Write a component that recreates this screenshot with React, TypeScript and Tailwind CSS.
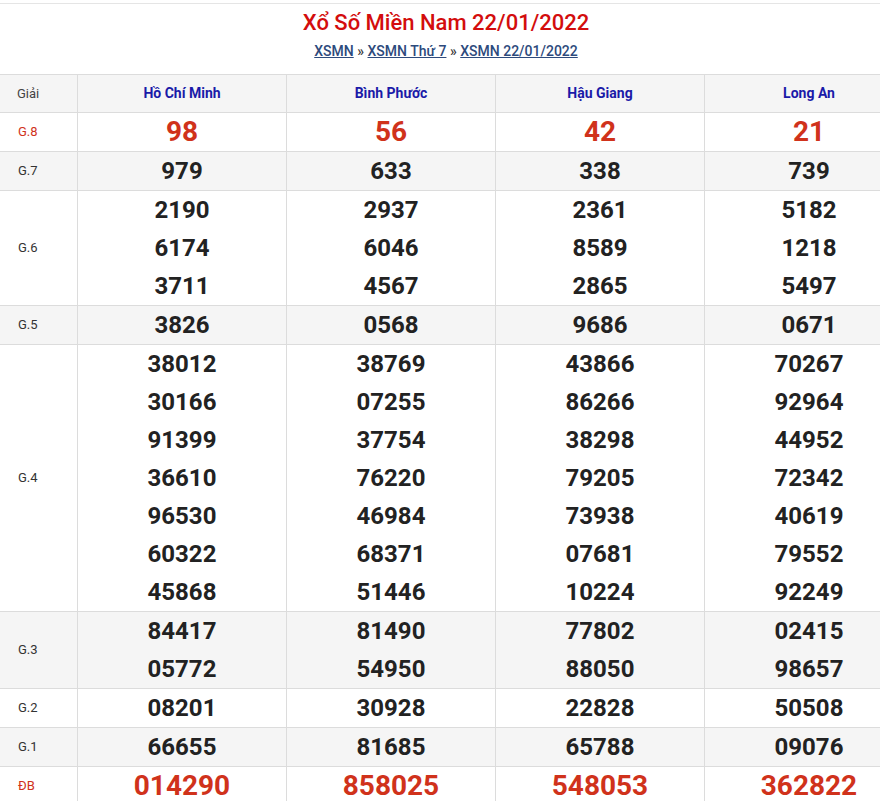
const provinces = ["Hồ Chí Minh", "Bình Phước", "Hậu Giang", "Long An"];
const rows: { label: string; vals: string[][]; grey: boolean; red?: boolean }[] = [
  { label: "G.8", grey: false, red: true, vals: [["98"], ["56"], ["42"], ["21"]] },
  { label: "G.7", grey: true, vals: [["979"], ["633"], ["338"], ["739"]] },
  { label: "G.6", grey: false, vals: [["2190", "6174", "3711"], ["2937", "6046", "4567"], ["2361", "8589", "2865"], ["5182", "1218", "5497"]] },
  { label: "G.5", grey: true, vals: [["3826"], ["0568"], ["9686"], ["0671"]] },
  { label: "G.4", grey: false, vals: [
    ["38012", "30166", "91399", "36610", "96530", "60322", "45868"],
    ["38769", "07255", "37754", "76220", "46984", "68371", "51446"],
    ["43866", "86266", "38298", "79205", "73938", "07681", "10224"],
    ["70267", "92964", "44952", "72342", "40619", "79552", "92249"],
  ] },
  { label: "G.3", grey: true, vals: [["84417", "05772"], ["81490", "54950"], ["77802", "88050"], ["02415", "98657"]] },
  { label: "G.2", grey: false, vals: [["08201"], ["30928"], ["22828"], ["50508"]] },
  { label: "G.1", grey: true, vals: [["66655"], ["81685"], ["65788"], ["09076"]] },
  { label: "ĐB", grey: false, red: true, vals: [["014290"], ["858025"], ["548053"], ["362822"]] },
];

export default function App() {
  return (
    <div className="w-[880px] h-[801px] overflow-hidden bg-white" style={{ fontFamily: "Roboto, 'Noto Sans', sans-serif" }}>
      <div className="w-[892px] border-t border-[#e5e5e5] mt-[3px]">
        <div className="text-center text-[#d30d0d] text-[22px] font-medium leading-[34px] pt-[2px]">Xổ Số Miền Nam 22/01/2022</div>
        <div className="text-center text-[14px] font-medium text-[#333] leading-[22px] h-[34px]">
          <span className="text-[#2d4a7c] underline">XSMN</span> » <span className="text-[#2d4a7c] underline">XSMN Thứ 7</span> » <span className="text-[#2d4a7c] underline">XSMN 22/01/2022</span>
        </div>
      </div>
      <div className="w-[914px] border-t border-[#dcdcdc]">
        <div className="flex bg-[#f5f5f5] border-b border-[#dcdcdc] h-[38px] items-center">
          <div className="w-[78px] pl-[17px] text-[13px] text-[#444] border-r border-[#dcdcdc] h-full flex items-center">Giải</div>
          {provinces.map((p) => (
            <div key={p} className="w-[209px] text-center text-[14px] font-bold text-[#1a1aa8] border-r border-[#dcdcdc] h-full flex items-center justify-center">{p}</div>
          ))}
        </div>
        {rows.map((r) => (
          <div key={r.label} className={`flex border-b border-[#dcdcdc] ${r.grey ? "bg-[#f5f5f5]" : "bg-white"}`}>
            <div className={`w-[78px] pl-[18px] text-[13px] border-r border-[#dcdcdc] flex items-center ${r.red ? "text-[#d0321b]" : "text-[#333]"}`}>{r.label}</div>
            {r.vals.map((v, i) => (
              <div key={i} className="w-[209px] border-r border-[#dcdcdc] flex flex-col items-center">
                {v.map((n, j) => (
                  <div key={j} className={`leading-[38px] font-bold ${r.red ? "text-[28px] text-[#d0321b]" : "text-[24px] text-[#222]"}`}>{n}</div>
                ))}
              </div>
            ))}
          </div>
        ))}
      </div>
    </div>
  );
}
